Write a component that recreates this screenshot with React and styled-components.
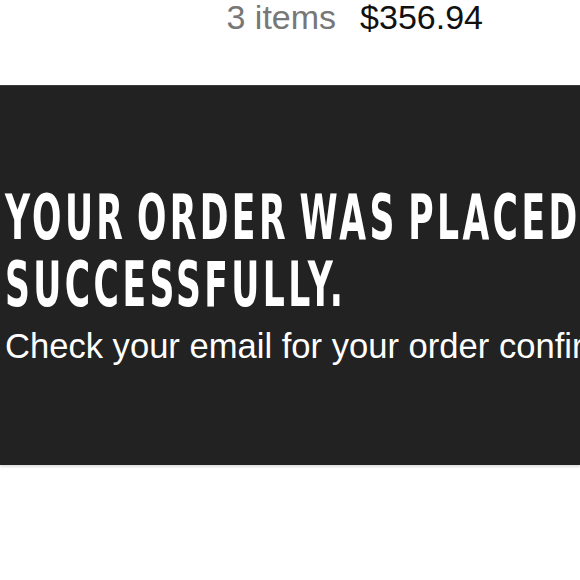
import React from 'react'
import styled, { createGlobalStyle } from 'styled-components'

const GlobalStyle = createGlobalStyle`
	html, body {
		margin: 0;
		padding: 0;
		background: #fff;
		font-family: "Liberation Sans", Arial, sans-serif;
		overflow: hidden;
	}
`

const Page = styled.div`
	width: 580px;
	height: 580px;
	overflow: hidden;
`

const CartBar = styled.div`
	height: 85px;
	display: flex;
	justify-content: flex-end;
	align-items: flex-start;
	gap: 24px;
	padding: 0 97px 0 0;
	font-size: 34px;
	line-height: 34px;
`

const CartCount = styled.span`
	color: #777;
`

const CartTotal = styled.span`
	color: #111;
`

const Confirmation = styled.section`
	background: #222;
	border-top: 1px solid #3a3a3a;
	box-shadow: 0 2px 2px rgba(0, 0, 0, 0.12);
	height: 380px;
	padding: 0 0 0 5px;
	box-sizing: border-box;
	overflow: hidden;
	white-space: nowrap;
`

const Heading = styled.h1`
	margin: 98px 0 0;
	color: #fff;
	font-family: "Liberation Sans Narrow", "DejaVu Sans Condensed", sans-serif;
	font-weight: bold;
	font-size: 62px;
	line-height: 67px;
	letter-spacing: 5.5px;
	word-spacing: -8px;
	transform: scaleX(0.62);
	transform-origin: left center;
`

const Message = styled.p`
	margin: 10px 0 0;
	color: #fff;
	font-size: 34.6px;
	line-height: 36px;
`

export default function App() {
	return (
		<Page>
			<GlobalStyle />
			<CartBar>
				<CartCount>3 items</CartCount>
				<CartTotal>$356.94</CartTotal>
			</CartBar>
			<Confirmation>
				<Heading>
					YOUR ORDER WAS PLACED
					<br />
					SUCCESSFULLY.
				</Heading>
				<Message>Check your email for your order confirmation.</Message>
			</Confirmation>
		</Page>
	)
}
